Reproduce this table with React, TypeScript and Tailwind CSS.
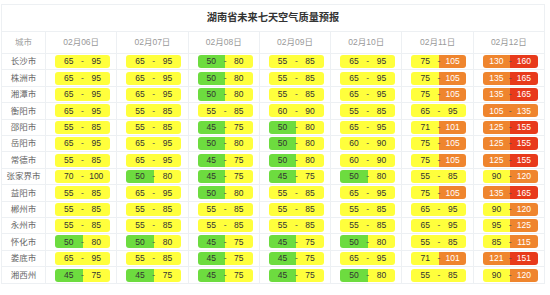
const dates = ['02月06日', '02月07日', '02月08日', '02月09日', '02月10日', '02月11日', '02月12日'];

type Range = [number, number];

const rows: { city: string; data: Range[] }[] = [
    { city: '长沙市', data: [[65, 95], [65, 95], [50, 80], [55, 85], [65, 95], [75, 105], [130, 160]] },
    { city: '株洲市', data: [[65, 95], [65, 95], [50, 80], [55, 85], [65, 95], [75, 105], [135, 165]] },
    { city: '湘潭市', data: [[65, 95], [65, 95], [50, 80], [55, 85], [65, 95], [75, 105], [135, 165]] },
    { city: '衡阳市', data: [[65, 95], [55, 85], [55, 85], [60, 90], [55, 85], [65, 95], [105, 135]] },
    { city: '邵阳市', data: [[55, 85], [55, 85], [45, 75], [50, 80], [65, 95], [71, 101], [125, 155]] },
    { city: '岳阳市', data: [[65, 95], [65, 95], [50, 80], [50, 80], [60, 90], [75, 105], [125, 155]] },
    { city: '常德市', data: [[55, 85], [65, 95], [45, 75], [50, 80], [60, 90], [75, 105], [125, 155]] },
    { city: '张家界市', data: [[70, 100], [50, 80], [45, 75], [45, 75], [50, 80], [55, 85], [90, 120]] },
    { city: '益阳市', data: [[55, 85], [65, 95], [50, 80], [55, 85], [65, 95], [75, 105], [135, 165]] },
    { city: '郴州市', data: [[55, 85], [55, 85], [55, 85], [55, 85], [55, 85], [65, 95], [90, 120]] },
    { city: '永州市', data: [[55, 85], [55, 85], [55, 85], [55, 85], [55, 85], [65, 95], [95, 125]] },
    { city: '怀化市', data: [[50, 80], [50, 80], [45, 75], [45, 75], [50, 80], [55, 85], [85, 115]] },
    { city: '娄底市', data: [[65, 95], [55, 85], [45, 75], [45, 75], [65, 95], [71, 101], [121, 151]] },
    { city: '湘西州', data: [[45, 75], [45, 75], [45, 75], [45, 75], [50, 80], [55, 85], [90, 120]] },
];

// aqi level -> half bar colour
const level = (v: number) => {
    if (v <= 50) return 'bg-[#6ddc3f] text-[#333]';
    if (v <= 100) return 'bg-[#ffff3c] text-[#333]';
    if (v <= 150) return 'bg-[#ef852e] text-white';
    return 'bg-[#e83a1b] text-white';
};

const Bar = ({ r }: { r: Range }) => (
    <div className="relative flex h-[13px] w-[55px] overflow-hidden rounded-[3px]">
        <div className={`flex flex-1 items-center justify-center ${level(r[0])}`}>{r[0]}</div>
        <div className={`flex flex-1 items-center justify-center ${level(r[1])}`}>{r[1]}</div>
        <div className="absolute inset-0 flex items-center justify-center text-[#555]">-</div>
    </div>
);

export default function App() {
    return (
        <div
            className="ml-[1px] mt-[4px] w-[544px] border border-[#edf0f3] bg-white text-[8.5px] leading-none"
            style={{ fontFamily: '"Liberation Sans", "Noto Sans CJK SC", sans-serif' }}
        >
            <div className="flex h-[27px] items-center justify-center border-b border-[#edf0f3] text-[10.2px] font-bold text-[#333]">
                湖南省未来七天空气质量预报
            </div>
            <div className="grid grid-cols-[43px_repeat(7,1fr)]">
                <div className="flex h-[22px] items-center justify-center border-b border-[#edf0f3] text-[#a0a0a0]">城市</div>
                {dates.map(d =>
                    <div key={d} className="flex h-[22px] items-center justify-center border-b border-l border-[#edf0f3] text-[#999]">{d}</div>
                )}
                {rows.map((row, i) => [
                    <div key={row.city} className={`flex h-[16.4px] items-center justify-center text-[#666] ${i < rows.length - 1 ? 'border-b border-[#edf0f3]' : ''}`}>{row.city}</div>,
                    ...row.data.map((r, j) =>
                        <div key={row.city + j} className={`flex h-[16.4px] items-center border-l border-[#edf0f3] pl-[9px] ${i < rows.length - 1 ? 'border-b' : ''}`}>
                            <Bar r={r} />
                        </div>
                    )
                ])}
            </div>
        </div>
    );
}
